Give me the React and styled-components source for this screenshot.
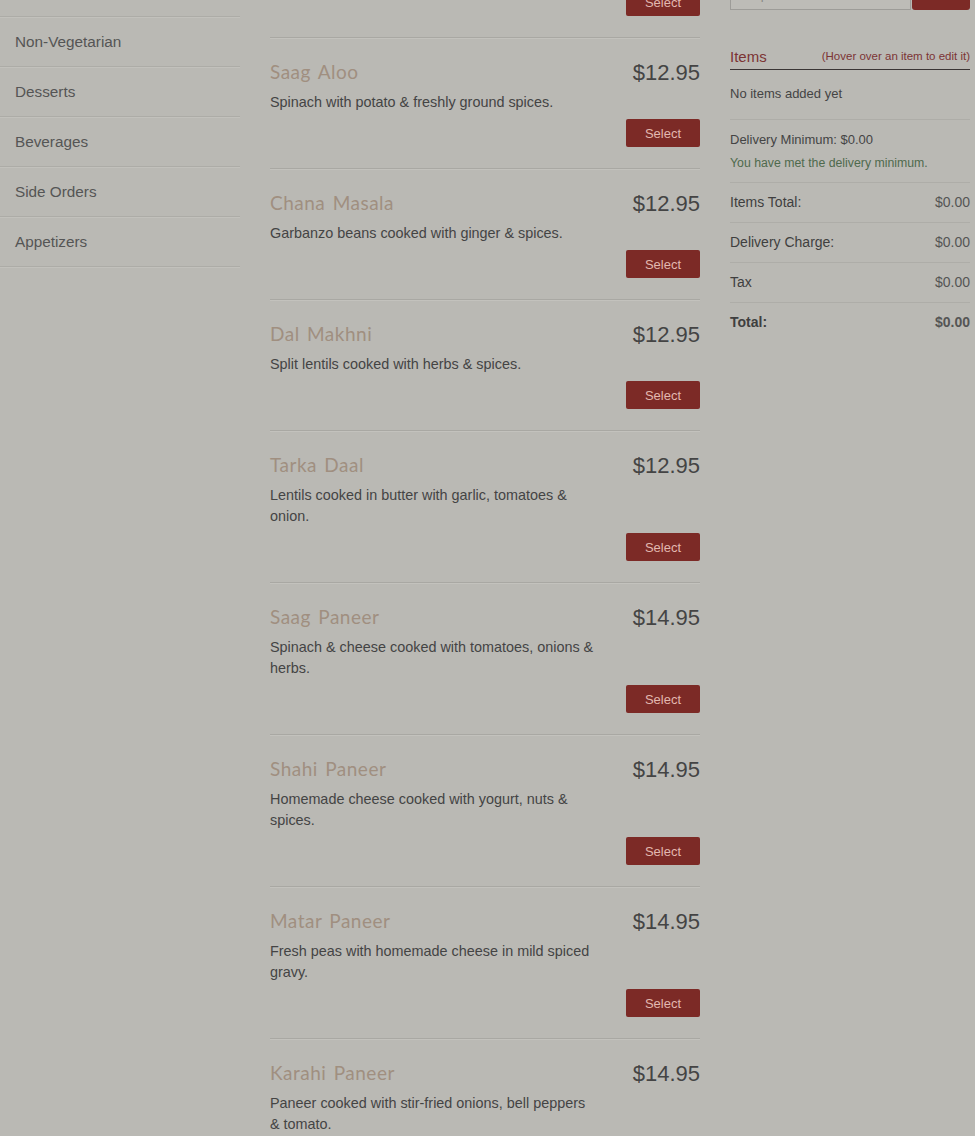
import styled, { createGlobalStyle } from "styled-components";

const GlobalStyle = createGlobalStyle`
  html, body {
    margin: 0;
    padding: 0;
    background: #bab9b4;
  }
  body {
    font-family: "Liberation Sans", Arial, sans-serif;
    color: #444;
  }
`;

const CATEGORIES = [
  "Specials",
  "Vegetarian",
  "Non-Vegetarian",
  "Desserts",
  "Beverages",
  "Side Orders",
  "Appetizers",
];

const DISHES = [
  {
    name: "Mixed Vegetables",
    price: "$12.95",
    desc: "Seasonal vegetables with spices.",
  },
  {
    name: "Saag Aloo",
    price: "$12.95",
    desc: "Spinach with potato & freshly ground spices.",
  },
  {
    name: "Chana Masala",
    price: "$12.95",
    desc: "Garbanzo beans cooked with ginger & spices.",
  },
  {
    name: "Dal Makhni",
    price: "$12.95",
    desc: "Split lentils cooked with herbs & spices.",
  },
  {
    name: "Tarka Daal",
    price: "$12.95",
    desc: "Lentils cooked in butter with garlic, tomatoes & onion.",
  },
  {
    name: "Saag Paneer",
    price: "$14.95",
    desc: "Spinach & cheese cooked with tomatoes, onions & herbs.",
  },
  {
    name: "Shahi Paneer",
    price: "$14.95",
    desc: "Homemade cheese cooked with yogurt, nuts & spices.",
  },
  {
    name: "Matar Paneer",
    price: "$14.95",
    desc: "Fresh peas with homemade cheese in mild spiced gravy.",
  },
  {
    name: "Karahi Paneer",
    price: "$14.95",
    desc: "Paneer cooked with stir-fried onions, bell peppers & tomato.",
  },
];

const TOTALS = [
  { label: "Items Total:", value: "$0.00" },
  { label: "Delivery Charge:", value: "$0.00" },
  { label: "Tax", value: "$0.00" },
  { label: "Total:", value: "$0.00", strong: true },
];

const App = () => {
  return (
    <>
      <GlobalStyle />
      <Page>
        <Sidebar>
          {CATEGORIES.map((c) => (
            <Category key={c}>{c}</Category>
          ))}
        </Sidebar>

        <Menu>
          {DISHES.map((d) => (
            <Dish key={d.name}>
              <DishHeader>
                <DishName>{d.name}</DishName>
                <Price>{d.price}</Price>
              </DishHeader>
              <Desc>{d.desc}</Desc>
              <SelectRow>
                <SelectButton>Select</SelectButton>
              </SelectRow>
            </Dish>
          ))}
        </Menu>

        <Cart>
          <CouponRow>
            <CouponInput placeholder="Coupon Code" />
            <CouponButton>Apply</CouponButton>
          </CouponRow>

          <ItemsHeader>
            <ItemsTitle>Items</ItemsTitle>
            <HoverNote>(Hover over an item to edit it)</HoverNote>
          </ItemsHeader>

          <CartSection>No items added yet</CartSection>

          <MinimumSection>
            <div>Delivery Minimum: $0.00</div>
            <MetNote>You have met the delivery minimum.</MetNote>
          </MinimumSection>

          {TOTALS.map((t) => (
            <TotalRow key={t.label} $strong={t.strong}>
              <span>{t.label}</span>
              <TotalValue>{t.value}</TotalValue>
            </TotalRow>
          ))}
        </Cart>
      </Page>
    </>
  );
};

export default App;

const Page = styled.div`
  display: grid;
  grid-template-columns: 240px 430px 240px;
  column-gap: 30px;
  align-items: start;
  width: 970px;
  margin-top: -93px;
`;

const Sidebar = styled.nav`
  display: flex;
  flex-direction: column;
  padding-top: 10px;
`;

const Category = styled.div`
  height: 49px;
  display: flex;
  align-items: center;
  padding-left: 15px;
  font-size: 15.3px;
  color: #555;
  border-bottom: 1px solid #adaca7;
  box-shadow: 0 1px 0 #c2c1bc;
`;

const Menu = styled.div`
  display: flex;
  flex-direction: column;
`;

const Dish = styled.div`
  padding: 20px 0 21px;
  border-bottom: 1px solid #a9a8a3;
  box-shadow: 0 1px 0 #c3c2bd;
`;

const DishHeader = styled.div`
  height: 30px;
  display: flex;
  align-items: center;
  justify-content: space-between;
`;

const DishName = styled.div`
  font-family: Lato, "Noto Sans", sans-serif;
  font-size: 19px;
  letter-spacing: 0.5px;
  word-spacing: 2px;
  padding-bottom: 4px;
  color: #a08f80;
`;

const Price = styled.div`
  font-size: 22px;
  color: #444;
`;

const Desc = styled.div`
  margin-top: 4px;
  width: 325px;
  font-size: 14.4px;
  line-height: 21px;
  color: #444;
`;

const SelectRow = styled.div`
  display: flex;
  justify-content: flex-end;
  margin-top: 6px;
`;

const SelectButton = styled.button`
  width: 74px;
  height: 28px;
  border: none;
  border-radius: 2px;
  background: #7c2a26;
  color: #e2b8b0;
  font-family: "Liberation Sans", Arial, sans-serif;
  font-size: 13px;
  padding: 0;
`;

const Cart = styled.aside`
  display: flex;
  flex-direction: column;
  padding-top: 63px;
  font-size: 13px;
`;

const CouponRow = styled.div`
  display: flex;
  align-items: flex-end;
  height: 40px;
`;

const CouponInput = styled.input`
  flex: 1;
  min-width: 0;
  width: 0;
  box-sizing: border-box;
  height: 32px;
  border: 1px solid #9d9c98;
  background: #bdbcb7;
  padding: 0 6px;
  font-family: "Liberation Sans", Arial, sans-serif;
  font-size: 13px;
  &::placeholder {
    color: #8a8985;
  }
`;

const CouponButton = styled.button`
  width: 58px;
  height: 40px;
  margin-left: 1px;
  padding: 0 0 14px;
  border: none;
  border-radius: 0 0 3px 3px;
  background: #7c2a26;
  color: #e2b8b0;
  font-size: 13px;
`;

const ItemsHeader = styled.div`
  display: flex;
  align-items: center;
  justify-content: space-between;
  margin-top: 35px;
  height: 24px;
  padding-bottom: 0;
  border-bottom: 1px solid #3a3535;

  & > span {
    margin-top: -2px;
  }
`;

const ItemsTitle = styled.span`
  font-size: 15px;
  color: #7c3434;
`;

const HoverNote = styled.span`
  font-size: 11.5px;
  color: #7c3434;
`;

const CartSection = styled.div`
  padding: 15px 0 16px;
  line-height: 18px;
  border-bottom: 1px solid #aeada8;
`;

const MinimumSection = styled.div`
  display: flex;
  flex-direction: column;
  gap: 5px;
  padding: 11px 0 10px;
  line-height: 18px;
  border-bottom: 1px solid #aeada8;
`;

const MetNote = styled.div`
  font-size: 12.3px;
  color: #4f6a4d;
`;

const TotalRow = styled.div`
  display: flex;
  align-items: center;
  justify-content: space-between;
  height: 39px;
  padding-bottom: 1px;
  box-sizing: border-box;
  height: 40px;
  font-size: 14px;
  font-weight: ${(p) => (p.$strong ? "bold" : "normal")};
  color: #3f3f3f;
  border-bottom: 1px solid ${(p) => (p.$strong ? "transparent" : "#aeada8")};
`;

const TotalValue = styled.span`
  color: #555;
`;
